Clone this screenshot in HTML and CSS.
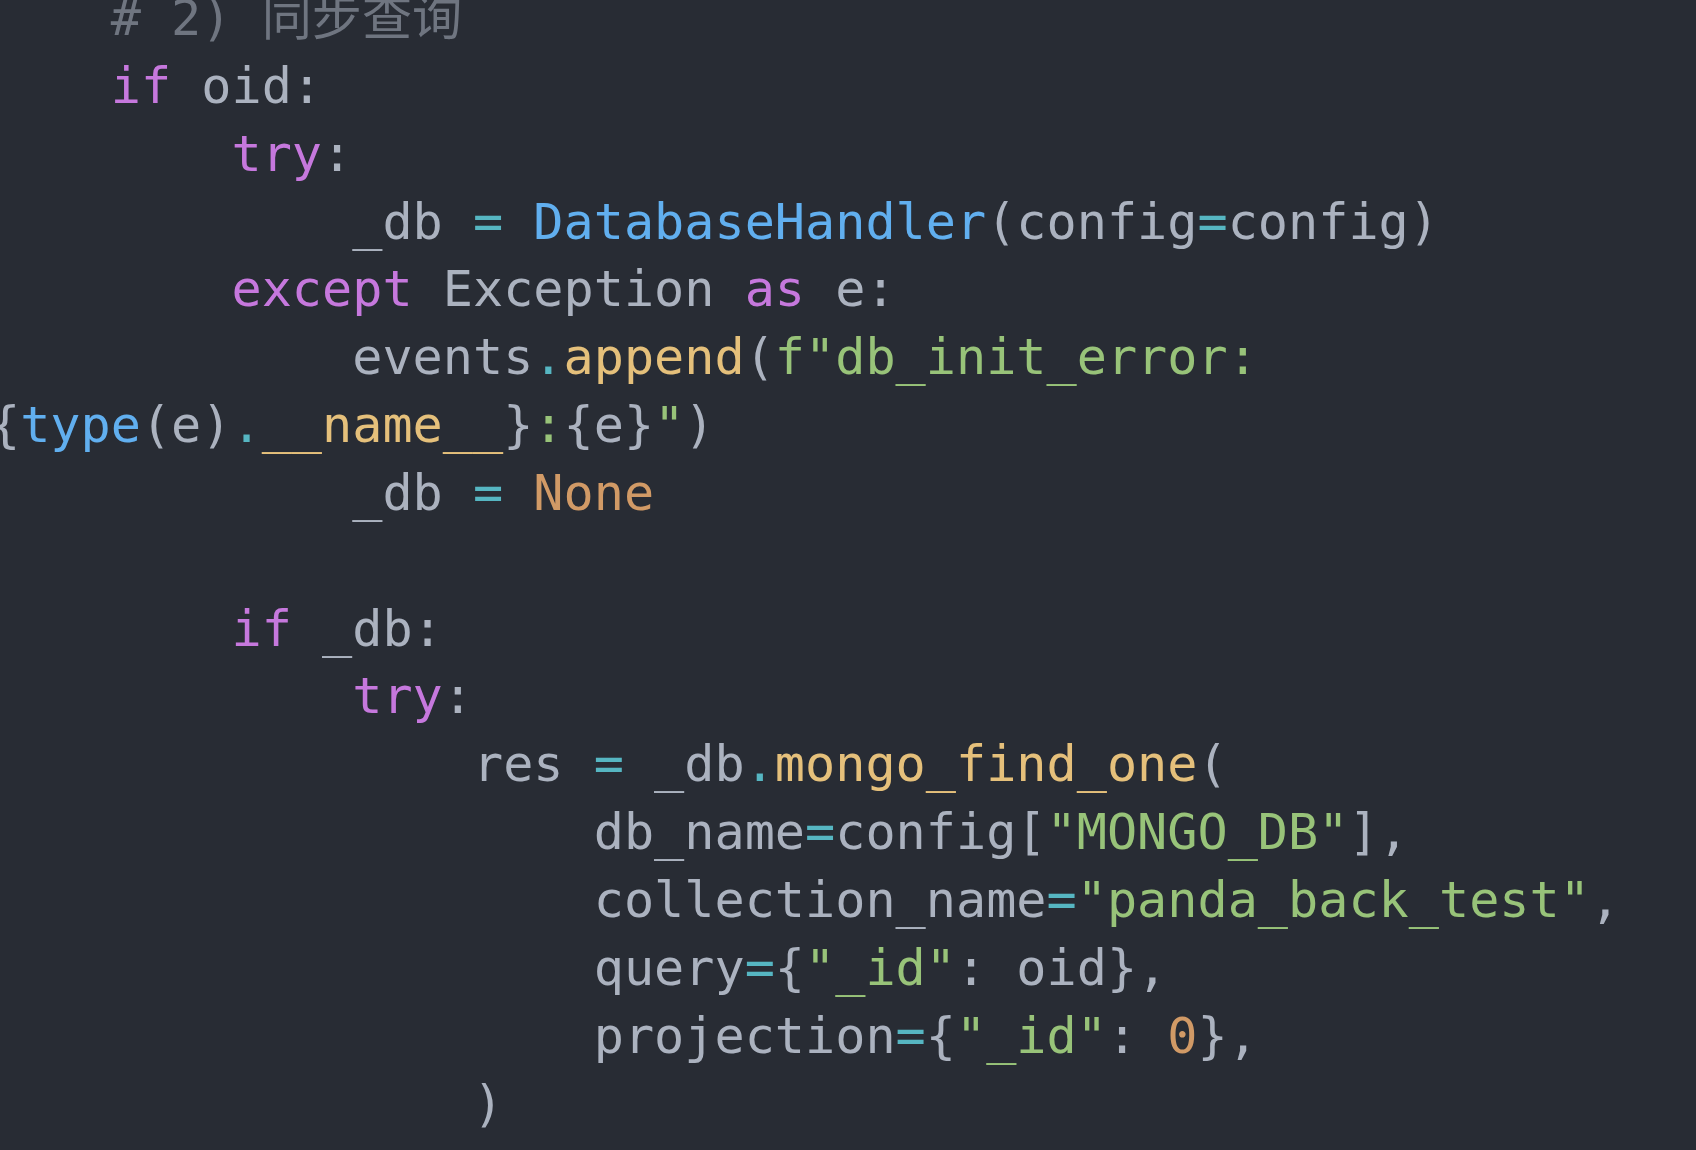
FILE: index.html
```html
<!DOCTYPE html>
<html lang="zh">
<head>
<meta charset="utf-8">
<title>code</title>
<link rel="stylesheet" href="styles.css">
</head>
<body>
<main class="editor">
  <div class="code">
    <div class="ln"><span class="ind4"></span><span class="cm"># 2) 同步查询</span></div>
    <div class="ln"><span class="ind4"></span><span class="kw">if</span> oid:</div>
    <div class="ln"><span class="ind8"></span><span class="kw">try</span>:</div>
    <div class="ln"><span class="ind12"></span>_db <span class="op">=</span> <span class="fn">DatabaseHandler</span>(config<span class="op">=</span>config)</div>
    <div class="ln"><span class="ind8"></span><span class="kw">except</span> Exception <span class="kw">as</span> e:</div>
    <div class="ln"><span class="ind12"></span>events<span class="op">.</span><span class="me">append</span>(<span class="st">f"db_init_error:</span></div>
    <div class="ln">{<span class="fn">type</span>(e)<span class="op">.</span><span class="me">__name__</span>}<span class="st">:</span>{e}<span class="st">"</span>)</div>
    <div class="ln"><span class="ind12"></span>_db <span class="op">=</span> <span class="nu">None</span></div>
    <div class="ln"> </div>
    <div class="ln"><span class="ind8"></span><span class="kw">if</span> _db:</div>
    <div class="ln"><span class="ind12"></span><span class="kw">try</span>:</div>
    <div class="ln"><span class="ind16"></span>res <span class="op">=</span> _db<span class="op">.</span><span class="me">mongo_find_one</span>(</div>
    <div class="ln"><span class="ind20"></span>db_name<span class="op">=</span>config[<span class="st">"MONGO_DB"</span>],</div>
    <div class="ln"><span class="ind20"></span>collection_name<span class="op">=</span><span class="st">"panda_back_test"</span>,</div>
    <div class="ln"><span class="ind20"></span>query<span class="op">=</span>{<span class="st">"_id"</span>: oid},</div>
    <div class="ln"><span class="ind20"></span>projection<span class="op">=</span>{<span class="st">"_id"</span>: <span class="nu">0</span>},</div>
    <div class="ln"><span class="ind16"></span>)</div>
  </div>
</main>
</body>
</html>
```
FILE: styles.css
```css
html, body {
  margin: 0;
  padding: 0;
  background: #282c34;
  overflow: hidden;
}

.editor {
  width: 1696px;
  height: 1150px;
  overflow: hidden;
  background: #282c34;
}

.code {
  margin-top: -16px;
  margin-left: -10px;
  font-family: "DejaVu Sans Mono", "Noto Sans CJK SC", monospace;
  font-size: 50.15px;
  line-height: 67.85px;
  color: #abb2bf;
}

.ln {
  white-space: pre;
  height: 67.85px;
}

.ind4 { display: inline-block; width: 4ch; }
.ind8 { display: inline-block; width: 8ch; }
.ind12 { display: inline-block; width: 12ch; }
.ind16 { display: inline-block; width: 16ch; }
.ind20 { display: inline-block; width: 20ch; }

.cm { color: #6f7580; }
.kw { color: #c678dd; }
.fn { color: #61afef; }
.me { color: #e5c07b; }
.st { color: #98c379; }
.nu { color: #d19a66; }
.op { color: #56b6c2; }
```
